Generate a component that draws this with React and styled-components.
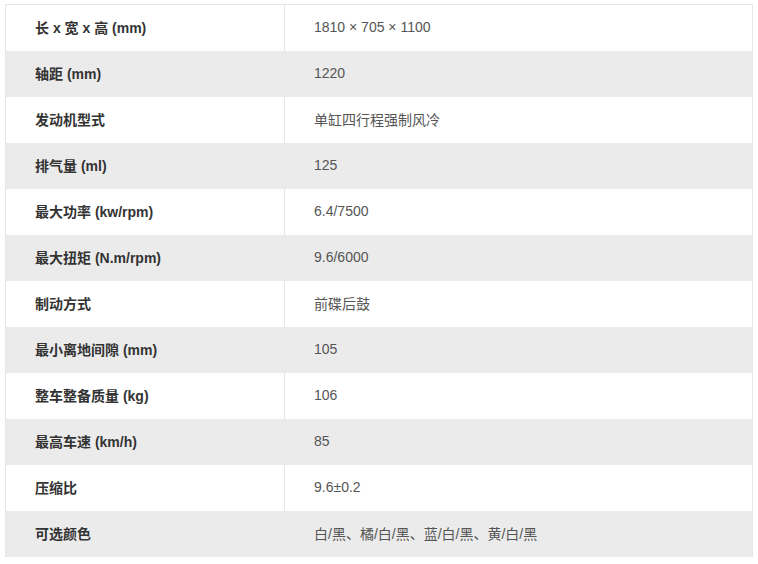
import React from 'react';
import styled, { createGlobalStyle } from 'styled-components';

const GlobalStyle = createGlobalStyle`
  html, body {
    margin: 0;
    padding: 0;
    background: #ffffff;
  }
`;

const Page = styled.div`
  padding: 4px 5px 0 5px;
  font-family: 'Liberation Sans', Arial, 'Noto Sans CJK SC', sans-serif;
`;

const SpecTable = styled.div`
  width: 748px;
  border: 1px solid #e6e6e6;
  border-bottom: none;
  box-sizing: border-box;
`;

const Row = styled.div`
  display: grid;
  grid-template-columns: 279px 1fr;
  height: 46px;
  background: ${props => (props.striped ? '#ebebeb' : '#ffffff')};
`;

const Label = styled.div`
  display: flex;
  align-items: center;
  padding-left: 29px;
  padding-bottom: 2px;
  font-size: 14px;
  font-weight: bold;
  color: #333333;
  border-right: 1px solid ${props => (props.striped ? '#ebebeb' : '#e6e6e6')};
`;

const Value = styled.div`
  display: flex;
  align-items: center;
  padding-left: 29px;
  padding-bottom: 2px;
  font-size: 14px;
  color: #555555;
`;

const specs = [
  ['长 x 宽 x 高 (mm)', '1810 × 705 × 1100'],
  ['轴距 (mm)', '1220'],
  ['发动机型式', '单缸四行程强制风冷'],
  ['排气量 (ml)', '125'],
  ['最大功率 (kw/rpm)', '6.4/7500'],
  ['最大扭矩 (N.m/rpm)', '9.6/6000'],
  ['制动方式', '前碟后鼓'],
  ['最小离地间隙 (mm)', '105'],
  ['整车整备质量 (kg)', '106'],
  ['最高车速 (km/h)', '85'],
  ['压缩比', '9.6±0.2'],
  ['可选颜色', '白/黑、橘/白/黑、蓝/白/黑、黄/白/黑'],
];

function App() {
  return (
    <Page>
      <GlobalStyle />
      <SpecTable>
        {specs.map(([label, value], i) => (
          <Row key={label} striped={i % 2 === 1}>
            <Label striped={i % 2 === 1}>{label}</Label>
            <Value>{value}</Value>
          </Row>
        ))}
      </SpecTable>
    </Page>
  );
}

export default App;
